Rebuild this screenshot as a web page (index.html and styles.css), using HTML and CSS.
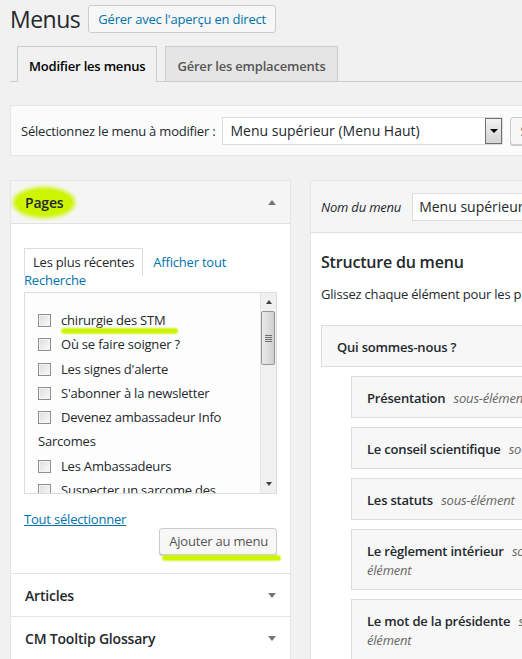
FILE: index.html
```html
<!DOCTYPE html>
<html lang="fr">
<head>
<meta charset="utf-8">
<title>Menus</title>
<link rel="stylesheet" href="styles.css">
</head>
<body>
<div class="wrap">
  <div class="head">
    <h1>Menus</h1>
    <a class="btn btn-live" href="#">Gérer avec l'aperçu en direct</a>
  </div>

  <nav class="tabs">
    <a class="tab active" href="#">Modifier les menus</a>
    <a class="tab" href="#">Gérer les emplacements</a>
  </nav>

  <div class="manage">
    <span class="manage-label">Sélectionnez le menu à modifier :</span>
    <div class="select">
      <span class="select-text">Menu supérieur (Menu Haut)</span>
      <span class="select-arrow"><span class="tri-down-black"></span></span>
    </div>
    <a class="btn btn-select" href="#">Sélectionner</a>
  </div>

  <div class="cols">
    <div class="side">
      <div class="acc-head open">
        <span class="hl-blob">Pages</span>
        <span class="tri tri-up"></span>
      </div>
      <div class="acc-body">
        <div class="ptabs">
          <span class="ptab">Les plus récentes</span>
          <a class="plink" href="#">Afficher tout</a>
          <a class="plink plink-wrap" href="#">Recherche</a>
        </div>
        <div class="listbox">
          <ul class="list">
            <li><label><span class="cb"></span><span class="marked">chirurgie des STM</span></label></li>
            <li><label><span class="cb"></span>Où se faire soigner ?</label></li>
            <li><label><span class="cb"></span>Les signes d'alerte</label></li>
            <li><label><span class="cb"></span>S'abonner à la newsletter</label></li>
            <li><label><span class="cb"></span>Devenez ambassadeur Info Sarcomes</label></li>
            <li><label><span class="cb"></span>Les Ambassadeurs</label></li>
            <li><label><span class="cb"></span>Suspecter un sarcome des tissus mous</label></li>
          </ul>
          <div class="scrollbar">
            <div class="sb-btn"><span class="sb-up"></span></div>
            <div class="sb-thumb"><span class="grip"></span><span class="grip"></span><span class="grip"></span><span class="grip"></span></div>
            <div class="sb-track"></div>
            <div class="sb-btn"><span class="sb-down"></span></div>
          </div>
        </div>
        <div class="acc-foot">
          <a class="select-all" href="#">Tout sélectionner</a>
          <div class="add-row"><a class="btn btn-add" href="#">Ajouter au menu</a></div>
        </div>
      </div>
      <div class="acc-head">
        <span>Articles</span>
        <span class="tri tri-down"></span>
      </div>
      <div class="acc-head last">
        <span>CM Tooltip Glossary</span>
        <span class="tri tri-down"></span>
      </div>
    </div>

    <div class="main">
      <div class="main-head">
        <span class="name-label">Nom du menu</span>
        <div class="name-input">Menu supérieur</div>
      </div>
      <div class="main-body">
        <h3>Structure du menu</h3>
        <p class="hint">Glissez chaque élément pour les placer dans l'ordre que vous préférez.</p>
        <ul class="menu-items">
          <li class="mi"><span class="mi-title">Qui sommes-nous ?</span></li>
          <li class="mi sub"><span class="mi-title">Présentation <em>sous-élément</em></span></li>
          <li class="mi sub"><span class="mi-title">Le conseil scientifique <em>sous-élément</em></span></li>
          <li class="mi sub"><span class="mi-title">Les statuts <em>sous-élément</em></span></li>
          <li class="mi sub"><span class="mi-title">Le règlement intérieur <em>sous-élément</em></span></li>
          <li class="mi sub"><span class="mi-title">Le mot de la présidente <em>sous-élément</em></span></li>
        </ul>
      </div>
    </div>
  </div>
</div>
</body>
</html>
```

FILE: styles.css
```css
html { overflow: hidden; }
body {
  margin: 0;
  background: #f1f1f1;
  font-family: "Open Sans", "Noto Sans", sans-serif;
  font-size: 13px;
  letter-spacing: -0.2px;
  color: #23282d;
}
a { text-decoration: none; }

.wrap {
  padding: 5px 0 0 10px;
  width: 760px;
}

/* heading */
.head {
  display: flex;
  align-items: center;
  gap: 8px;
  height: 28px;
}
h1 {
  margin: 0;
  font-size: 23px;
  font-weight: 400;
  line-height: 28px;
  letter-spacing: -0.5px;
}
.btn {
  display: inline-block;
  box-sizing: border-box;
  height: 28px;
  line-height: 26px;
  padding: 0 9px;
  border: 1px solid #ccc;
  border-radius: 3px;
  background: #f7f7f7;
  box-shadow: 0 1px 0 #ccc;
  color: #555;
  white-space: nowrap;
}
.btn-live { color: #0073aa; box-shadow: none; }

/* nav tabs */
.tabs {
  display: flex;
  align-items: flex-end;
  gap: 8px;
  margin-top: 13px;
  padding-left: 7px;
  height: 35px;
  border-bottom: 1px solid #ccc;
}
.tab {
  box-sizing: border-box;
  height: 35px;
  padding: 7px 11px 0;
  line-height: 24px;
  border: 1px solid #ccc;
  border-bottom: 0;
  background: #e5e5e5;
  color: #555;
  font-size: 13px;
  font-weight: 600;
}
.tab.active {
  height: 36px;
  margin-bottom: -1px;
  background: #f1f1f1;
  color: #000;
}

/* manage bar */
.manage {
  display: flex;
  align-items: center;
  box-sizing: border-box;
  height: 51px;
  margin-top: 23px;
  padding: 0 10px;
  border: 1px solid #e5e5e5;
  background: #fbfbfb;
}
.manage-label { margin-right: 7px; white-space: nowrap; }
.select {
  display: flex;
  align-items: center;
  box-sizing: border-box;
  width: 281px;
  height: 28px;
  border: 1px solid #ddd;
  background: #fff;
  font-size: 14px;
}
.select-text { flex: 1; padding-left: 7px; white-space: nowrap; letter-spacing: 0; }
.select-arrow {
  display: flex;
  align-items: center;
  justify-content: center;
  box-sizing: border-box;
  width: 17px;
  height: 26px;
  border: 1px solid #707070;
  background: linear-gradient(#f2f2f2, #d4d4d4);
}
.tri-down-black {
  width: 0; height: 0;
  border-left: 4px solid transparent;
  border-right: 4px solid transparent;
  border-top: 4px solid #000;
}
.btn-select { margin-left: 7px; color: #555; }

/* columns */
.cols {
  display: flex;
  align-items: flex-start;
  gap: 19px;
  margin-top: 24px;
}
.side {
  box-sizing: border-box;
  width: 281px;
  flex: none;
  border: 1px solid #e5e5e5;
  background: #fff;
}
.acc-head {
  display: flex;
  align-items: center;
  justify-content: space-between;
  height: 42px;
  padding: 0 14px 0 14px;
  border-bottom: 1px solid #e5e5e5;
  font-size: 14px;
  font-weight: 600;
  background: #fff;
}
.acc-head.open { background: #f5f5f5; border-bottom-color: #e1e1e1; }
.acc-head.last { border-bottom: 0; }
.hl-blob {
  padding: 3px 9px;
  margin-left: -9px;
  background: #cdf400;
  border-radius: 50%;
  box-shadow: 0 0 4px 3px #cdf400;
}
.tri {
  width: 0; height: 0;
  border-left: 4.5px solid transparent;
  border-right: 4.5px solid transparent;
}
.tri-up { border-bottom: 5px solid #72777c; }
.tri-down { border-top: 5px solid #72777c; }

.acc-body {
  padding: 24px 13px 18px;
  border-bottom: 1px solid #e5e5e5;
}
.ptabs {
  display: flex;
  flex-wrap: wrap;
  align-items: flex-start;
}
.ptab {
  box-sizing: border-box;
  height: 28px;
  padding: 4px 8px 0;
  line-height: 19px;
  border: 1px solid #ddd;
  border-bottom: 0;
  background: #fff;
}
.plink {
  color: #0073aa;
  line-height: 19px;
  padding: 5px 0 0 10px;
}
.plink-wrap {
  flex-basis: 100%;
  padding: 0;
  margin-top: -4px;
  line-height: 17px;
}
.listbox {
  display: flex;
  box-sizing: border-box;
  height: 202px;
  margin-top: 3px;
  border: 1px solid #ddd;
  background: #fdfdfd;
}
.list {
  flex: 1;
  margin: 0;
  padding: 15px 10px 0 13px;
  list-style: none;
  overflow: hidden;
  line-height: 24.25px;
}
.list label { display: block; }
.cb {
  display: inline-block;
  box-sizing: border-box;
  width: 13px;
  height: 13px;
  margin: 0 10px 0 0;
  vertical-align: -2px;
  border: 1px solid #8e8f8f;
  background: linear-gradient(135deg, #dcdcdc, #fbfbfb);
  box-shadow: inset 0 0 0 1px #f4f4f4;
}
.marked { position: relative; }
.marked::after {
  content: "";
  position: absolute;
  left: 1px;
  right: -11px;
  bottom: -4px;
  height: 4px;
  border-radius: 3px;
  background: #cdf400;
  box-shadow: 0 0 2px 1px #d4f52a;
}
.scrollbar {
  display: flex;
  flex-direction: column;
  box-sizing: border-box;
  width: 16px;
  background: #f0f0f0;
  border-left: 1px solid #e6e6e6;
}
.sb-btn {
  display: flex;
  align-items: center;
  justify-content: center;
  height: 18px;
}
.sb-up, .sb-down {
  width: 0; height: 0;
  border-left: 3.5px solid transparent;
  border-right: 3.5px solid transparent;
}
.sb-up { border-bottom: 4px solid #404040; }
.sb-down { border-top: 4px solid #404040; }
.sb-thumb {
  display: flex;
  flex-direction: column;
  align-items: center;
  justify-content: center;
  gap: 1px;
  box-sizing: border-box;
  height: 54px;
  margin: 0 1px 0 0;
  border: 1px solid #959595;
  border-radius: 2px;
  background: linear-gradient(90deg, #e9e9e9, #dadada 60%, #cfcfcf);
}
.grip { width: 7px; height: 1px; background: #6e6e6e; }
.sb-track { flex: 1; }

.acc-foot { padding-top: 16px; }
.select-all {
  color: #0073aa;
  text-decoration: underline;
  line-height: 17px;
}
.add-row {
  display: flex;
  justify-content: flex-end;
  margin-top: 0;
}
.btn-add {
  position: relative;
  height: 27px;
  line-height: 25px;
  padding: 0 8px 0 9px;
  font-size: 13px;
}
.btn-add::after {
  content: "";
  position: absolute;
  left: 3px;
  right: -4px;
  bottom: -6px;
  height: 4px;
  border-radius: 3px;
  background: #cdf400;
  box-shadow: 0 0 2px 1px #d4f52a;
}

/* main column */
.main {
  box-sizing: border-box;
  width: 430px;
  flex: none;
  border: 1px solid #e5e5e5;
  background: #fff;
}
.main-head {
  display: flex;
  align-items: center;
  height: 51px;
  padding: 0 10px;
  background: #f5f5f5;
  border-bottom: 1px solid #e1e1e1;
}
.name-label { font-style: italic; margin-right: 11px; }
.name-input {
  box-sizing: border-box;
  width: 250px;
  height: 28px;
  line-height: 26px;
  padding: 0 6px;
  border: 1px solid #ddd;
  background: #fff;
  font-size: 14px;
  letter-spacing: 0;
}
.main-body { padding: 17px 10px 0; }
h3 {
  margin: 0;
  font-size: 16px;
  font-weight: 600;
  line-height: 24px;
}
.hint { margin: 10px 0 0; line-height: 20px; white-space: nowrap; }
.menu-items { list-style: none; margin: 21px 0 0; padding: 0; }
.mi {
  box-sizing: border-box;
  width: 382px;
  margin-bottom: 9px;
  padding: 12px 15px 9px;
  border: 1px solid #dcdcdc;
  background: #f7f7f7;
  line-height: 19px;
  font-weight: 600;
}
.mi.sub { margin-left: 30px; }
.mi-title { display: block; width: 216px; }
.mi em {
  font-style: italic;
  font-weight: 400;
  color: #666;
  margin-left: 5px;
}
```
